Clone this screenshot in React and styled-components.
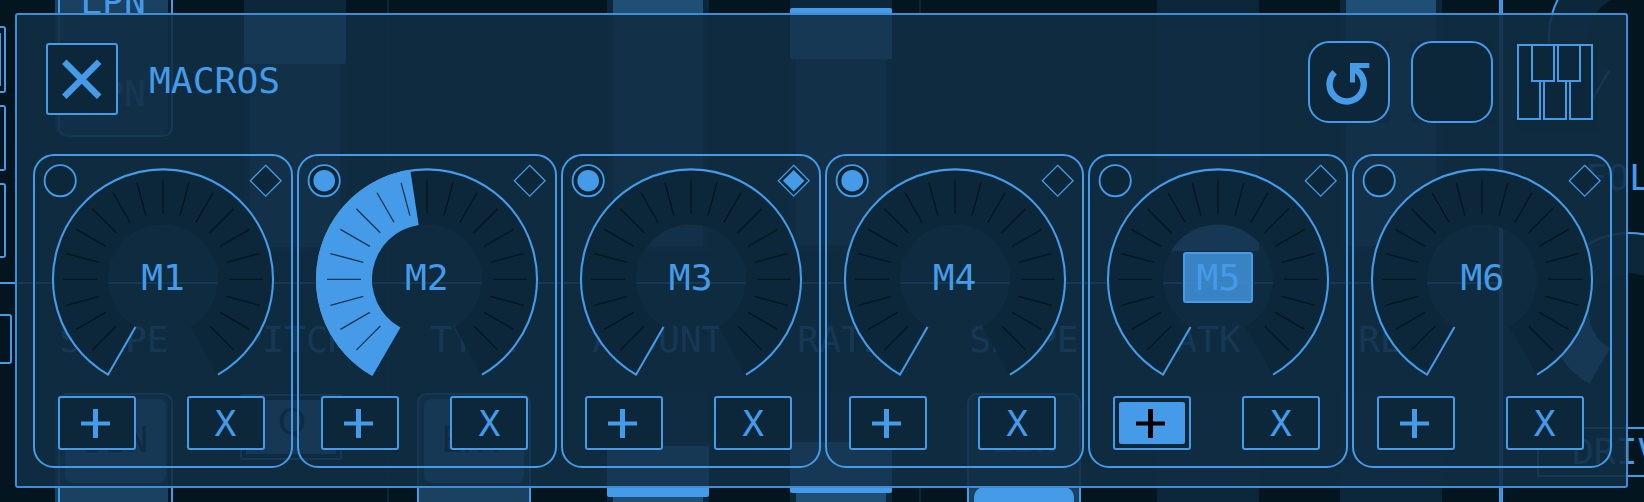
import React from 'react';
import styled, { createGlobalStyle, ThemeProvider } from 'styled-components';

const theme = {
  accent: '#459be8',
  page: '#03151f',
  control: '#0c2739',
  fill: '#1f4f75',
  box: '#1a4160',
  hairline: '#0d2738',
  panel: 'rgba(17, 46, 68, 0.9)',
};

const GlobalStyle = createGlobalStyle`
  * { box-sizing: border-box; }
  body { margin: 0; background: #03151f; overflow: hidden; }
`;

const Stage = styled.main`
  display: grid;
  width: 1644px;
  height: 502px;
  overflow: hidden;
  background: ${p => p.theme.page};
  color: ${p => p.theme.accent};
  font: 36.3px/44px "DejaVu Sans Mono", monospace;
`;

/* ---------- synth page behind the dialog ---------- */

const Backdrop = styled.div`
  grid-area: 1 / 1;
  display: flex;
  width: 1644px;
  height: 502px;
  overflow: hidden;
`;

const Voices = styled.div`
  display: flex;
  flex-direction: column;
  width: 1499px;
  flex: none;
`;

const Row = styled.div`
  display: flex;
  height: ${p => p.$h}px;
  overflow: hidden;
`;

const Rule = styled.div`
  height: 2px;
  flex: none;
  background: ${p => p.theme.accent};
`;

const VerticalRule = styled.div`
  width: 4px;
  flex: none;
  border: solid ${p => p.theme.accent};
  border-width: 0 1px;
  background: #4190da;
`;

const Hairline = styled.div`
  width: 2px;
  flex: none;
  margin-left: ${p => p.$ml}px;
  background: ${p => p.theme.hairline};
`;

const Column = styled.div`
  display: flex;
  flex-direction: column;
  flex: none;
  width: ${p => p.$w || 102}px;
  margin-left: ${p => p.$ml}px;
`;

const Rail = styled.div`
  display: flex;
  flex-direction: column;
  flex: none;
  width: 12px;
`;

const RailKey = styled.div`
  flex: none;
  width: ${p => p.$w || 6}px;
  height: ${p => p.$h}px;
  margin-top: ${p => p.$mt}px;
  padding: 5px 3px 5px 0;
  border: 2px solid ${p => p.theme.accent};
  border-left: 0;
  border-radius: 0 3px 3px 0;
`;

const RailMark = styled.div`
  width: 1px;
  height: 100%;
  background: ${p => p.theme.accent};
`;

const Caption = styled.div`
  flex: none;
  display: flex;
  justify-content: center;
  height: 42px;
  margin-top: ${p => p.$mt}px;
  margin-left: ${p => p.$ml || 0}px;
  white-space: pre;
`;

const Track = styled.div`
  flex: none;
  height: ${p => p.$h}px;
  margin-top: ${p => p.$mt || 0}px;
  background: ${p => p.theme.control};
`;

const TrackFill = styled.div`
  height: ${p => p.$h}px;
  margin: 0 6px;
  background: ${p => p.$empty ? 'transparent' : p.theme.fill};
`;

const Handle = styled.div`
  height: 51px;
  border-radius: 2px;
  background: ${p => p.theme.accent};
`;

const Slot = styled.div`
  flex: none;
  width: 113px;
  height: ${p => p.$h}px;
  margin-top: ${p => p.$mt || 0}px;
  border-radius: ${p => p.$end ? '0 0 10px 10px' : '10px 10px 0 0'};
  background: ${p => p.theme.box};
`;

const SlotFrame = styled.div`
  display: flex;
  flex-direction: column;
  width: ${p => p.$w || 115}px;
  height: 100%;
  margin-left: ${p => p.$shift || 0}px;
  padding: ${p => p.$end ? '0' : '4px 5px'};
  border: 2px solid ${p => p.theme.accent};
  border-width: ${p => p.$end ? '0 2px 2px' : '2px 2px 0'};
  border-radius: ${p => p.$end ? '0 0 10px 10px' : '10px 10px 0 0'};
`;

const Chip = styled.div`
  flex: none;
  display: flex;
  justify-content: center;
  height: 84px;
  padding-top: 19px;
  border-radius: 8px;
  color: ${p => p.theme.page};
  background: ${p => p.theme.accent};
`;

const NextChip = styled.div`
  height: 40px;
  flex: none;
  margin-top: 27px;
  border-radius: 10px;
  background: ${p => p.theme.accent};
`;

const Select = styled.div`
  height: 66px;
  margin-top: 34px;
  padding: 4px;
  border: 2px solid ${p => p.theme.accent};
  border-radius: 3px;
`;

const SelectFace = styled.div`
  height: 54px;
  padding-left: 2px;
  text-align: center;
  font-family: "DejaVu Sans", sans-serif;
  color: ${p => p.theme.page};
  background: ${p => p.theme.accent};
`;

const Effects = styled.div`
  display: flex;
  flex-direction: column;
  flex: none;
  width: 141px;
  overflow: hidden;
`;

const SmallDial = styled.svg`
  flex: none;
  display: block;
  width: 164px;
  height: 164px;
  margin: ${p => p.$mt}px 0 0 44px;
`;

const DriveBox = styled.div`
  flex: none;
  width: 180px;
  height: 50px;
  margin: 32px 0 0 34px;
  padding: 1px 0 0 33px;
  border: 2px solid ${p => p.theme.accent};
`;

/* ---------- macros dialog ---------- */

const Panel = styled.section`
  grid-area: 1 / 1;
  z-index: 1;
  width: 1613px;
  height: 475px;
  margin: 13px 0 0 15px;
  padding: 0 16px;
  border: 2px solid #3f8dd4;
  border-radius: 3px;
  background: ${p => p.theme.panel};
`;

const Header = styled.header`
  display: flex;
  align-items: flex-start;
  height: 139px;
  padding: 26px 0 0 13px;
`;

const CloseButton = styled.button`
  display: grid;
  place-items: center;
  width: 72px;
  height: 72px;
  margin-top: 2px;
  padding: 0;
  border: 2px solid ${p => p.theme.accent};
  border-radius: 3px;
  background: ${p => p.theme.control};
`;

const Title = styled.h1`
  margin: 18px 0 0 31px;
  font: inherit;
`;

const Tools = styled.div`
  display: flex;
  align-items: flex-start;
  margin-left: auto;
  margin-right: 13px;
`;

const ToolBack = styled.div`
  width: 82px;
  margin-right: ${p => p.$gap}px;
  background: rgba(12, 39, 57, 0.3);
`;

const ToolButton = styled.button`
  display: block;
  width: 82px;
  height: 82px;
  padding: 0;
  border: 2px solid ${p => p.theme.accent};
  border-radius: 21px;
  background: ${p => p.theme.control};
`;

const KeysButton = styled.div`
  width: 81px;
  height: 90px;
  padding: 3px 0 0 1px;
  background: rgba(12, 39, 57, 0.3);
`;

const Cards = styled.div`
  display: flex;
  gap: 4px;
`;

const Card = styled.article`
  flex: none;
  width: 259.87px;
  height: 314px;
  border: 2px solid ${p => p.theme.accent};
  border-radius: 21px;
`;

const DialArea = styled.div`
  display: grid;
  height: 240px;
  & > * { grid-area: 1 / 1; }
`;

const DialSvg = styled.svg`
  width: 256px;
  height: 239px;
`;

const Mark = styled.svg`
  width: 36px;
  height: 36px;
  margin: 7px;
  justify-self: ${p => p.$side};
`;

const Name = styled.div`
  justify-self: center;
  width: 70px;
  height: 51px;
  margin-top: 96px;
  padding-top: 2px;
  text-align: center;
  border: 2px solid ${p => p.$on ? p.theme.accent : 'transparent'};
  border-radius: 3px;
  background: ${p => p.$on ? 'rgba(69, 155, 232, 0.78)' : 'transparent'};
`;

const Actions = styled.div`
  display: flex;
  gap: 51px;
  padding-left: 22.5px;
`;

const Action = styled.button`
  width: 78px;
  height: 54px;
  padding: 4px;
  border: 2px solid ${p => p.theme.accent};
  border-radius: 3px;
  color: ${p => p.$on ? '#000' : p.theme.accent};
  background: ${p => p.theme.control};
  font: inherit;
`;

const ActionFace = styled.span`
  display: grid;
  place-items: center;
  height: 42px;
  border-radius: 2px;
  line-height: 41px;
  background: ${p => p.$on ? p.theme.accent : 'transparent'};
`;

const point = (cx, cy, r, deg) => {
  const a = (deg * Math.PI) / 180;
  return [cx + r * Math.sin(a), cy - r * Math.cos(a)];
};

const ring = (cx, cy, outer, inner, from, to) => {
  const large = to - from > 180 ? 1 : 0;
  const [a, b, c, d] = [
    point(cx, cy, outer, from),
    point(cx, cy, outer, to),
    point(cx, cy, inner, to),
    point(cx, cy, inner, from),
  ];
  return `M${a} A${outer} ${outer} 0 ${large} 1 ${b} L${c} A${inner} ${inner} 0 ${large} 0 ${d} Z`;
};

const outline = (cx, cy, outer, inner) =>
  `M${point(cx, cy, inner, -150)} L${point(cx, cy, outer, -150)} A${outer} ${outer} 0 1 1 ${point(cx, cy, outer, 150)}`;

const TICKS = Array.from({ length: 19 }, (_, i) => -135 + i * 15);

function Dial({ to }) {
  const cx = 128;
  const cy = 123.4;
  return (
    <DialSvg viewBox="0 0 256 239">
      <path d={ring(cx, cy, 110, 55, -150, 150)} fill={theme.control} />
      <path d={outline(cx, cy, 110, 55)} fill="none" stroke={theme.accent} strokeWidth="2.1" />
      {to !== undefined && <path d={ring(cx, cy, 111, 55, -150, to)} fill={theme.accent} />}
      {TICKS.map(t => {
        const [x1, y1] = point(cx, cy, 100, t);
        const [x2, y2] = point(cx, cy, 66, t);
        return <line key={t} x1={x1} y1={y1} x2={x2} y2={y2} stroke="#000c14" strokeOpacity="0.7" strokeWidth="1.3" />;
      })}
    </DialSvg>
  );
}

const PlusIcon = styled.svg`
  display: block;
  width: 29px;
  height: 29px;
  margin-right: 3px;
`;

const Plus = () => (
  <PlusIcon viewBox="0 0 29 29">
    <path d="M12 0h5v12.5h12v4H17V29h-5V16.5H0v-4h12z" fill="currentColor" />
  </PlusIcon>
);

function Macro({ name, lit, gem, to, learning }) {
  return (
    <Card>
      <DialArea>
        <Dial to={to} />
        <Mark $side="start" viewBox="0 0 36 36">
          <circle cx="18.2" cy="17.7" r="15.6" fill={theme.control} stroke={theme.accent} strokeWidth="1.9" />
          {lit && <circle cx="18.2" cy="17.7" r="10.8" fill={theme.accent} />}
        </Mark>
        <Mark $side="end" viewBox="0 0 36 36">
          <path d="M17.7 2.3L33.1 17.7L17.7 33.1L2.3 17.7Z" fill={theme.control} stroke={theme.accent} strokeWidth="1.3" />
          {gem && <path d="M17.7 6.9L28.5 17.7L17.7 28.5L6.9 17.7Z" fill={theme.accent} />}
        </Mark>
        <Name $on={learning}>{name}</Name>
      </DialArea>
      <Actions>
        <Action $on={learning}>
          <ActionFace $on={learning}><Plus /></ActionFace>
        </Action>
        <Action><ActionFace>X</ActionFace></Action>
      </Actions>
    </Card>
  );
}

const MACROS = [
  { name: 'M1' },
  { name: 'M2', lit: true, to: -8.7 },
  { name: 'M3', lit: true, gem: true },
  { name: 'M4', lit: true },
  { name: 'M5', learning: true },
  { name: 'M6' },
];

const ResetIcon = () => (
  <svg width="78" height="78" viewBox="0 0 78 78" fill="none" stroke={theme.accent}>
    <path d="M24.6 29.2A17.1 17.1 0 1 0 47 27.7L43 24" strokeWidth="6.5" />
    <path d="M42.5 39.5V22.5H59.3" strokeWidth="5" />
  </svg>
);

const KeysIcon = () => (
  <svg width="76" height="76" viewBox="0 0 76 76" fill={theme.control} stroke={theme.accent} strokeWidth="2">
    <rect x="0" y="0" width="76" height="76" stroke="none" />
    <rect x="1" y="1" width="22" height="74" />
    <rect x="27" y="1" width="22" height="74" />
    <rect x="53" y="1" width="22" height="74" />
    <rect x="15" y="1" width="22" height="36" />
    <rect x="41" y="1" width="22" height="36" />
    <path d="M0 1H76" />
  </svg>
);

function SynthPage() {
  return (
    <Backdrop aria-hidden="true">
      <Voices>
        <Row $h={282}>
          <Rail>
            <RailKey $mt={26} $h={67}><RailMark /></RailKey>
            <RailKey $mt={12} $h={66} />
            <RailKey $mt={12} $h={75} />
          </Rail>
          <Column $ml={43} $w={118}>
            <Slot $h={137} $end>
              <SlotFrame $shift={3} $end>
                <Caption $mt={-20} $ml={-5}>LPN</Caption>
                <Caption $mt={50} $ml={-5}>LPN</Caption>
              </SlotFrame>
            </Slot>
          </Column>
          <Column $ml={71}>
            <Track $h={252}>
              <TrackFill $h={13} $empty />
              <Handle />
              <TrackFill $h={183} />
            </Track>
          </Column>
          <Hairline $ml={41} />
          <Column $ml={218}>
            <Track $h={252}><TrackFill $h={246} /></Track>
          </Column>
          <Column $ml={81}>
            <Track $h={252}>
              <TrackFill $h={8} $empty />
              <Handle />
              <TrackFill $h={186} />
            </Track>
          </Column>
          <Hairline $ml={27} />
          <Column $ml={236}>
            <Track $h={251}>
              <TrackFill $h={200} $empty />
              <Handle />
            </Track>
          </Column>
          <Column $ml={81}>
            <Track $h={252}><TrackFill $h={246} /></Track>
          </Column>
        </Row>
        <Rule />
        <Row $h={218}>
          <Rail><RailKey $mt={30} $w={12} $h={50} /></Rail>
          <Column $ml={43} $w={118}>
            <Caption $mt={34}>SHAPE</Caption>
            <Slot $h={120} $mt={33}>
              <SlotFrame $shift={3}><Chip>SIN</Chip></SlotFrame>
            </Slot>
          </Column>
          <Column $ml={67}>
            <Caption $mt={34} $ml={8}>PITCH</Caption>
            <Select><SelectFace>Q</SelectFace></Select>
          </Column>
          <Hairline $ml={45} />
          <Column $ml={28} $w={114}>
            <Caption $mt={34}>TYPE</Caption>
            <Slot $h={120} $mt={33}>
              <SlotFrame $w={114}><Chip>ENV</Chip></SlotFrame>
            </Slot>
          </Column>
          <Column $ml={76}>
            <Caption $mt={34}>AMOUNT</Caption>
            <Track $mt={33} $h={120}>
              <TrackFill $h={53} $empty />
              <Handle />
              <TrackFill $h={20} />
            </Track>
          </Column>
          <Column $ml={81}>
            <Caption $mt={34}>RATE</Caption>
            <Track $mt={33} $h={120}>
              <TrackFill $h={49} $empty />
              <Handle />
              <TrackFill $h={20} />
            </Track>
          </Column>
          <Hairline $ml={27} />
          <Column $ml={46} $w={114}>
            <Caption $mt={34}>SHAPE</Caption>
            <Slot $h={130} $mt={33}>
              <SlotFrame $w={114}>
                <Caption $mt={19}>LIN</Caption>
                <NextChip />
              </SlotFrame>
            </Slot>
          </Column>
          <Column $ml={76}>
            <Caption $mt={34}>ATK</Caption>
            <Track $mt={33} $h={120} />
          </Column>
          <Column $ml={81}>
            <Caption $mt={34}>REL</Caption>
            <Track $mt={33} $h={120} />
          </Column>
        </Row>
      </Voices>
      <VerticalRule />
      <Effects>
        <SmallDial $mt={-46} viewBox="0 0 164 164">
          <path d={ring(82, 82, 80, 40, -150, 150)} fill={theme.control} />
          <path d={outline(82, 82, 80, 40)} fill="none" stroke={theme.accent} strokeWidth="2" />
        </SmallDial>
        <Caption $mt={38} $ml={111}>FOLD</Caption>
        <SmallDial $mt={33} viewBox="0 0 164 164">
          <path d={ring(82, 82, 80, 40, -150, 150)} fill={theme.control} />
          <path d={outline(82, 82, 80, 40)} fill="none" stroke={theme.accent} strokeWidth="2" />
          <path d={ring(82, 82, 81, 40, -150, -80)} fill={theme.accent} />
        </SmallDial>
        <DriveBox>DRIVE</DriveBox>
      </Effects>
    </Backdrop>
  );
}

export default function App() {
  return (
    <ThemeProvider theme={theme}>
      <GlobalStyle />
      <Stage>
        <SynthPage />
        <Panel>
          <Header>
            <CloseButton aria-label="Close">
              <svg width="40" height="40" viewBox="0 0 40 40" stroke={theme.accent} strokeWidth="6.4">
                <path d="M2.3 2.8L37.2 37.7M37.2 2.8L2.3 37.7" />
              </svg>
            </CloseButton>
            <Title>MACROS</Title>
            <Tools>
              <ToolBack $gap={21}><ToolButton aria-label="Reset"><ResetIcon /></ToolButton></ToolBack>
              <ToolBack $gap={23}><ToolButton aria-label="Blank" /></ToolBack>
              <KeysButton><KeysIcon /></KeysButton>
            </Tools>
          </Header>
          <Cards>
            {MACROS.map(m => <Macro key={m.name} {...m} />)}
          </Cards>
        </Panel>
      </Stage>
    </ThemeProvider>
  );
}
